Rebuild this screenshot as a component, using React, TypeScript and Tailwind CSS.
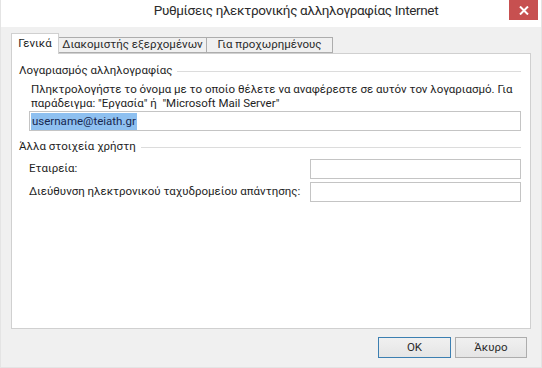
import React from "react";

export default function App() {
  const font = { fontFamily: 'Roboto, "Noto Sans", sans-serif' };
  return (
    <div
      className="w-[542px] h-[368px] bg-[#f0f0f0] flex flex-col text-[11.5px] text-[#1e1e1e] overflow-hidden border-x border-b border-[#e4e4e4]"
      style={font}
    >
      {/* Title bar */}
      <div className="relative h-[27px] bg-white flex items-center justify-center shrink-0">
        <span className="text-[13.5px] tracking-[-0.35px] text-[#2b2b2b] leading-none mt-[-5px] pl-[50px] whitespace-nowrap">
          Ρυθμίσεις ηλεκτρονικής αλληλογραφίας Internet
        </span>
        <div className="absolute top-0 right-[3px] w-[29px] h-[20px] bg-[#c75050] flex items-center justify-center">
          <svg width="10" height="9" viewBox="0 0 10 9">
            <path d="M1 0.5 L9 8.5 M9 0.5 L1 8.5" stroke="#fff" strokeWidth="2" />
          </svg>
        </div>
      </div>

      {/* Tabs */}
      <div className="pl-[10px] pr-[10px] pt-[6px] flex flex-col">
        <div className="flex items-end h-[20px] relative z-10">
          <div className="w-[48px] h-[21px] bg-white border border-[#d0d0d0] border-b-0 flex items-center justify-center mb-[-1px] whitespace-nowrap">
            Γενικά
          </div>
          <div className="w-[148px] h-[16px] bg-[#f0f0f0] border border-[#adadad] border-l-0 flex items-center justify-center text-[#2a2a2a] whitespace-nowrap">
            Διακομιστής εξερχομένων
          </div>
          <div className="w-[126px] h-[16px] bg-[#f0f0f0] border border-[#adadad] border-l-0 flex items-center justify-center text-[#2a2a2a] whitespace-nowrap">
            Για προχωρημένους
          </div>
        </div>

        {/* Panel */}
        <div className="h-[276px] bg-white border border-[#d0d0d0] pl-[7px] pr-[9px] pt-[10px] flex flex-col">
          {/* Group 1 */}
          <div className="flex items-center gap-[5px] h-[14px]">
            <span className="whitespace-nowrap leading-none">Λογαριασμός αλληλογραφίας</span>
            <div className="flex-1 h-px bg-[#dcdcdc]" />
          </div>
          <div className="pl-[12px] pt-[4px] leading-[14px]">
            <div className="whitespace-nowrap">Πληκτρολογήστε το όνομα με το οποίο θέλετε να αναφέρεστε σε αυτόν τον λογαριασμό. Για</div>
            <div className="whitespace-nowrap">παράδειγμα: "Εργασία" ή &nbsp;"Microsoft Mail Server"</div>
          </div>
          <div className="ml-[10px] mt-[1px] h-[20px] border border-[#c4c4c4] flex items-center pl-[1px]">
            <span className="bg-[#8ec0f0] text-[#17274f] h-[17px] leading-[17px] px-[1px]">username@teiath.gr</span>
          </div>

          {/* Group 2 */}
          <div className="flex items-center gap-[5px] h-[14px] mt-[9px]">
            <span className="whitespace-nowrap leading-none">Άλλα στοιχεία χρήστη</span>
            <div className="flex-1 h-px bg-[#dcdcdc]" />
          </div>
          <div className="pl-[10px] mt-[5px] flex flex-col gap-[3px]">
            <div className="flex items-center justify-between h-[20px]">
              <span className="whitespace-nowrap">Εταιρεία:</span>
              <div className="w-[211px] h-[20px] border border-[#c4c4c4] bg-white" />
            </div>
            <div className="flex items-center justify-between h-[20px]">
              <span className="whitespace-nowrap">Διεύθυνση ηλεκτρονικού ταχυδρομείου απάντησης:</span>
              <div className="w-[211px] h-[20px] border border-[#c4c4c4] bg-white" />
            </div>
          </div>
        </div>
      </div>

      {/* Buttons */}
      <div className="flex justify-end gap-[4px] pr-[14px] pt-[8px]">
        <button className="w-[73px] h-[21px] border border-[#3c7fb1] bg-gradient-to-b from-[#f0f0f0] to-[#e5e5e5] text-[#2a2a2a] leading-none">
          OK
        </button>
        <button className="w-[72px] h-[21px] border border-[#adadad] bg-gradient-to-b from-[#f0f0f0] to-[#e5e5e5] text-[#2a2a2a] leading-none">
          Άκυρο
        </button>
      </div>
    </div>
  );
}
